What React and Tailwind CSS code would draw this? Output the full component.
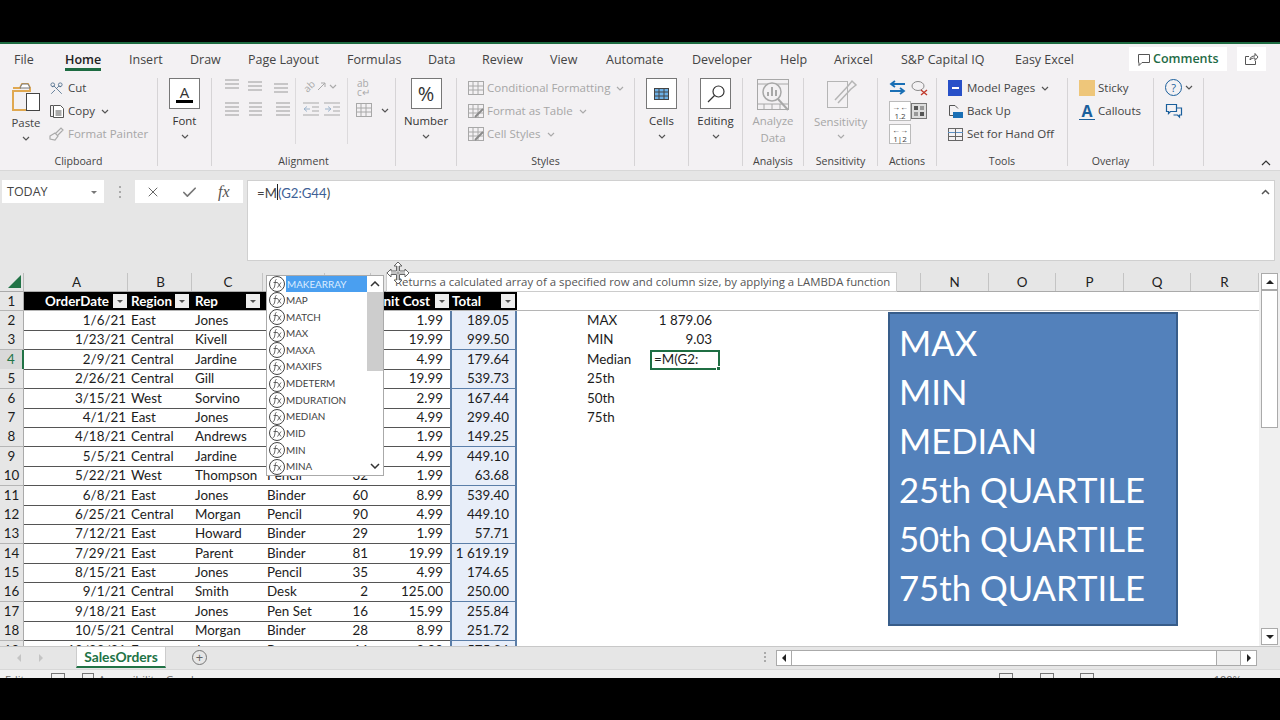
import React from "react";
import { Scissors, X, Check } from "lucide-react";

const rows = [
  ["1/6/21", "East", "Jones", "", "", "1.99", "189.05"],
  ["1/23/21", "Central", "Kivell", "", "", "19.99", "999.50"],
  ["2/9/21", "Central", "Jardine", "", "", "4.99", "179.64"],
  ["2/26/21", "Central", "Gill", "", "", "19.99", "539.73"],
  ["3/15/21", "West", "Sorvino", "", "", "2.99", "167.44"],
  ["4/1/21", "East", "Jones", "", "", "4.99", "299.40"],
  ["4/18/21", "Central", "Andrews", "", "", "1.99", "149.25"],
  ["5/5/21", "Central", "Jardine", "", "", "4.99", "449.10"],
  ["5/22/21", "West", "Thompson", "Pencil", "32", "1.99", "63.68"],
  ["6/8/21", "East", "Jones", "Binder", "60", "8.99", "539.40"],
  ["6/25/21", "Central", "Morgan", "Pencil", "90", "4.99", "449.10"],
  ["7/12/21", "East", "Howard", "Binder", "29", "1.99", "57.71"],
  ["7/29/21", "East", "Parent", "Binder", "81", "19.99", "1 619.19"],
  ["8/15/21", "East", "Jones", "Pencil", "35", "4.99", "174.65"],
  ["9/1/21", "Central", "Smith", "Desk", "2", "125.00", "250.00"],
  ["9/18/21", "East", "Jones", "Pen Set", "16", "15.99", "255.84"],
  ["10/5/21", "Central", "Morgan", "Binder", "28", "8.99", "251.72"],
  ["10/22/21", "East", "Jones", "Pen", "64", "8.99", "575.36"],
];

const sideCells = {
  2: ["MAX", "1 879.06"],
  3: ["MIN", "9.03"],
  4: ["Median", ""],
  5: ["25th", ""],
  6: ["50th", ""],
  7: ["75th", ""],
};

const columns = "grid grid-cols-[24px_104px_64px_71px_62px_46px_79px_67px_67px_67px_68px_67px_68px_67px_68px_67px_68px_67px_68px]";
const letters = ["A", "B", "C", "", "", "", "", "", "", "", "", "", "", "N", "O", "P", "Q", "R"];
const functions = ["MAP", "MATCH", "MAX", "MAXA", "MAXIFS", "MDETERM", "MDURATION", "MEDIAN", "MID", "MIN", "MINA"];
const tabs = [
  ["File", "w-[51px]"], ["Home", "w-[64px]"], ["Insert", "w-[61px]"], ["Draw", "w-[58px]"], ["Page Layout", "w-[99px]"],
  ["Formulas", "w-[81px]"], ["Data", "w-[54px]"], ["Review", "w-[68px]"], ["View", "w-[56px]"], ["Automate", "w-[86px]"],
  ["Developer", "w-[88px]"], ["Help", "w-[54px]"], ["Arixcel", "w-[67px]"], ["S&P Capital IQ", "w-[114px]"], ["Easy Excel", "w-[114px]"],
];

const Chevron = ({ className = "text-[#555]" }) => (
  <svg className={className} width="8" height="5" viewBox="0 0 8 5" fill="none" stroke="currentColor" strokeWidth="1.2">
    <path d="M1 1l3 3 3-3" />
  </svg>
);

const Lines = ({ ys, x1 = 0, x2 = 14 }) => (
  <svg width="16" height="14" viewBox="0 0 16 14" stroke="#a9a9a9" strokeWidth="1.2">
    {ys.map((y) => <path key={y} d={`M${x1} ${y}H${x2}`} />)}
  </svg>
);

const Indent = ({ flip }) => (
  <svg width="16" height="14" viewBox="0 0 16 14" fill="none" stroke="#a9a9a9">
    <path d="M0 1H16M9 5H16M9 9H16M0 13H16" />
    <path d={flip ? "M1 7H7M4 4.500L7 7 4 9.500" : "M1 7H7M4 4.500L1 7 4 9.500"} stroke="#9db4cc" />
  </svg>
);

const Group = ({ width, label, children }) => (
  <div className={`mt-[3px] flex h-[88px] shrink-0 flex-col border-r border-[#d6d4d6] ${width}`}>
    <div className="-mt-[2px] flex h-[72px] shrink-0">{children}</div>
    <div className="mt-[6px] h-[15px] text-center text-[10.6px] leading-[15px] text-[#444]">{label}</div>
  </div>
);

const BoxButton = ({ label, children }) => (
  <div className="flex w-full flex-col items-center pt-[2px]">
    <div className="flex h-[31px] w-[31px] items-center justify-center border border-[#777] bg-white">{children}</div>
    <div className="mt-[3px] text-[11.4px] leading-[18px] text-[#333]">{label}</div>
    <div className="mt-[4px]"><Chevron /></div>
  </div>
);

const SmallRow = ({ icon, text, muted, chevron }) => (
  <div className={`flex h-[23px] items-center gap-[3px] whitespace-nowrap pt-px text-[11.5px] ${muted ? "text-[#a6a6a6]" : "text-[#444]"}`}>
    <span className="flex w-[16px] shrink-0 items-center">{icon}</span>
    <span>{text}</span>
    {chevron && <span className="ml-[3px]"><Chevron className={muted ? "text-[#aaa]" : "text-[#555]"} /></span>}
  </div>
);

const GrayGrid = ({ kind }) => (
  <svg width="16" height="14" viewBox="0 0 16 14" fill="none" stroke="#a8a8a8">
    <rect x="0.5" y="0.5" width="15" height="13" />
    <path d="M0 5H16M0 9H16M5 0V14M10 0V14" />
    {kind && <path d="M7 13L15 5" stroke="#8a8a8a" strokeWidth="2" />}
  </svg>
);

const FilterButton = () => (
  <span className="flex h-[14px] w-[14px] shrink-0 items-center justify-center bg-[#eeeeee]">
    <span className="h-0 w-0 border-x-[3px] border-t-[3px] border-x-transparent border-t-[#555]" />
  </span>
);

const FxIcon = () => (
  <svg className="shrink-0" width="16" height="16" viewBox="0 0 16 16" fill="none" stroke="#444">
    <circle cx="8" cy="8" r="7.500" fill="#fff" />
    <path d="M7.500 3.500C6 3.500 6.500 5 6 8S5.500 12.500 3.800 12.500M4.500 6.500H8.500M8.500 6.500L12 11.500M12 6.500L8.500 11.500" strokeWidth="0.8" />
  </svg>
);

const ScrollButton = ({ children }) => (
  <div className="flex h-[17px] w-[17px] shrink-0 items-center justify-center border border-[#aaa] bg-white">{children}</div>
);

const DataRow = ({ number, row }) => {
  const active = number === 4;
  const side = sideCells[number];
  return (
    <div className={`${columns} h-[19.4px] text-[13.4px] leading-[19px] text-[#1c1c1c]`}>
      <div className={`border-b border-[#b5b5b5] text-center ${active ? "border-r-2 border-r-[#217346] bg-[#d9d9d9] text-[#217346]" : "border-r border-r-[#aaa] bg-[#e6e6e6]"}`}>{number}</div>
      <div className="overflow-hidden border-b border-[#555] pr-[2px] text-right">{row[0]}</div>
      <div className="overflow-hidden border-b border-[#555] pl-[3px]">{row[1]}</div>
      <div className="overflow-hidden border-b border-[#555] pl-[3px]">{row[2]}</div>
      <div className="overflow-hidden border-b border-[#555] pl-[4px]">{row[3]}</div>
      <div className="overflow-hidden border-b border-[#555] pr-[3px] text-right">{row[4]}</div>
      <div className="overflow-hidden border-b border-[#555] pr-[7px] text-right">{row[5]}</div>
      <div className="overflow-hidden border-x-2 border-b border-[#5b7ea8] bg-[#e8eef9] pr-[6px] text-right">{row[6]}</div>
      <div />
      <div className="pl-[3px]">{side ? side[0] : ""}</div>
      {active ? (
        <div className="relative -mx-px border-2 border-[#1f6e43] pl-[2px] leading-[15px]">
          =M(G2:
          <span className="absolute -bottom-[3px] -right-[3px] h-[5px] w-[5px] border border-white bg-[#1f6e43]" />
        </div>
      ) : (
        <div className="pr-[7px] text-right">{side ? side[1] : ""}</div>
      )}
    </div>
  );
};

const Ribbon = () => (
  <div className="flex h-[95px] shrink-0 bg-[#f3f1f3] text-[#444]">
    <Group width="w-[158px]" label="Clipboard">
      <div className="flex w-[50px] shrink-0 flex-col items-center pl-[2px] pt-[5px]">
        <svg width="30" height="30" viewBox="0 0 30 30" fill="none">
          <path d="M2 7h7l2-4h6l2 4v3H2v19h13" stroke="#e0a850" strokeWidth="2" />
          <path d="M9 7l2-4h6l2 4z" fill="#fff" stroke="#777" />
          <rect x="15.5" y="12.5" width="13" height="17" fill="#fff" stroke="#444" />
        </svg>
        <div className="mt-[3px] text-[11.4px] leading-[18px]">Paste</div>
        <div className="mt-[4px]"><Chevron /></div>
      </div>
      <div className="-ml-px flex flex-col">
        <SmallRow icon={<Scissors size={15} className="rotate-90 text-[#4a6b8a]" strokeWidth={1.3} />} text="Cut" />
        <SmallRow
          icon={
            <svg width="16" height="15" viewBox="0 0 16 15" fill="none" stroke="#555">
              <path d="M4 1.500H1.500v11H4" />
              <path d="M4.500 1.500h7l3 3v9h-10z" fill="#fff" />
              <path d="M6.500 7h6M6.500 9h6M6.500 11h6" />
            </svg>
          }
          text="Copy"
          chevron
        />
        <SmallRow
          muted
          icon={
            <svg width="16" height="14" viewBox="0 0 16 14" fill="none" stroke="#aaa" strokeWidth="1.2">
              <path d="M1 9l5-3 3 3-3 4-5-1zM7 6l5-5 2 2-5 5" />
            </svg>
          }
          text="Format Painter"
        />
      </div>
    </Group>
    <Group width="w-[54px]" label="">
      <BoxButton label="Font">
        <div className="flex flex-col items-center text-[15px] leading-[16px] text-[#333]">
          A
          <span className="h-[3px] w-[17px] bg-black" />
        </div>
      </BoxButton>
    </Group>
    <Group width="w-[184px]" label="Alignment">
      <div className="flex w-[83px] flex-col gap-[9px] pl-[13px] pt-[3px]">
        <div className="flex gap-[7px]">
          <Lines ys={[1, 5, 9]} />
          <Lines ys={[3, 7, 11]} />
          <span className="ml-[3px]"><Lines ys={[5, 9, 13]} /></span>
        </div>
        <div className="flex gap-[7px]">
          <Lines ys={[1, 5, 9, 13]} x2={14} />
          <Lines ys={[1, 5, 9, 13]} x1={1} />
          <span className="ml-[3px]"><Lines ys={[1, 5, 9, 13]} x1={2} x2={16} /></span>
        </div>
      </div>
      <div className="my-[2px] h-[66px] w-px bg-[#dcdadc]" />
      <div className="flex w-[51px] flex-col gap-[9px] pl-[7px] pt-[3px]">
        <div className="flex h-[14px] items-center gap-[3px]">
          <span className="-rotate-45 text-[10px] leading-none text-[#a9a9a9]">ab</span>
          <svg width="8" height="8" viewBox="0 0 8 8" fill="none" stroke="#a9a9a9">
            <path d="M0 8L7 1M3 1h4v4" />
          </svg>
          <Chevron className="text-[#aaa]" />
        </div>
        <div className="flex gap-[5px]">
          <Indent />
          <Indent flip />
        </div>
      </div>
      <div className="my-[2px] h-[66px] w-px bg-[#dcdadc]" />
      <div className="flex flex-col gap-[6px] pl-[8px] pt-[3px]">
        <div className="pl-[1px] text-[10px] leading-[9px] text-[#a9a9a9]">ab<br />c↵</div>
        <div className="flex items-center gap-[9px]">
          <GrayGrid />
          <Chevron />
        </div>
      </div>
    </Group>
    <Group width="w-[61px]" label="">
      <BoxButton label="Number">
        <span className="text-[20px] leading-none text-[#333]">%</span>
      </BoxButton>
    </Group>
    <Group width="w-[178px]" label="Styles">
      <div className="flex flex-col pl-[11px]">
        <SmallRow muted icon={<GrayGrid />} text="Conditional Formatting" chevron />
        <SmallRow muted icon={<GrayGrid kind />} text="Format as Table" chevron />
        <SmallRow muted icon={<GrayGrid kind />} text="Cell Styles" chevron />
      </div>
    </Group>
    <Group width="w-[54px]" label="">
      <BoxButton label="Cells">
        <svg width="17" height="17" viewBox="0 0 17 17" fill="none" stroke="#444">
          <rect x="1.5" y="3.5" width="14" height="11" fill="#6db0e6" />
          <path d="M1 7H16M1 11H16M6 3V15M11 3V15" />
        </svg>
      </BoxButton>
    </Group>
    <Group width="w-[54px]" label="">
      <BoxButton label="Editing">
        <svg width="20" height="20" viewBox="0 0 20 20" fill="none" stroke="#333" strokeWidth="1.2">
          <circle cx="12.5" cy="7.5" r="5.5" />
          <path d="M8.5 11.5L2 18" />
        </svg>
      </BoxButton>
    </Group>
    <Group width="w-[61px]" label="Analysis">
      <div className="flex w-full flex-col items-center pt-[2px] text-[11.4px] leading-[17px] text-[#a6a6a6]">
        <svg width="34" height="34" viewBox="0 0 34 34" fill="none" stroke="#a8a8a8">
          <rect x="1.5" y="1.5" width="31" height="30" />
          <path d="M1 6H33M1 26H33M8 26V32M16 26V32M24 26V32" />
          <circle cx="16" cy="14" r="9" fill="#f3f1f3" strokeWidth="1.5" />
          <path d="M22 21l10 11" strokeWidth="2" />
          <path d="M12 18v-4M16 18V9M20 18v-6" strokeWidth="2" />
        </svg>
        <span>Analyze</span>
        <span>Data</span>
      </div>
    </Group>
    <Group width="w-[74px]" label="Sensitivity">
      <div className="flex w-full flex-col items-center pt-[2px] text-[11.4px] leading-[17px] text-[#a6a6a6]">
        <svg className="mb-[1px]" width="34" height="32" viewBox="0 0 34 32" fill="none" stroke="#b5b5b5">
          <rect x="3.5" y="3.5" width="20" height="26" />
          <path d="M11 22L24 8M14 25L27 11M24 8l4-5 4 4-5 4" strokeWidth="1.5" />
        </svg>
        <span className="mt-[2px]">Sensitivity</span>
        <span className="mt-[4px]"><Chevron className="text-[#aaa]" /></span>
      </div>
    </Group>
    <Group width="w-[59px]" label="Actions">
      <div className="grid grid-cols-[22px_18px] grid-rows-[23px_23px_23px] items-center pl-[11px]">
        <svg width="17" height="15" viewBox="0 0 17 15" fill="none" stroke="#1a6fb5" strokeWidth="1.8">
          <path d="M16 4H3M6 1L2 4l4 3M1 11h13M11 8l4 3-4 3" />
        </svg>
        <svg width="17" height="16" viewBox="0 0 17 16" fill="none" stroke="#8a8a8a">
          <ellipse cx="7" cy="6" rx="6" ry="4.5" />
          <path d="M10 10l6 5M16 10l-6 5" stroke="#c0392b" strokeWidth="1.4" />
        </svg>
        <div className="border border-[#bbb] bg-white text-center text-[8px] leading-[9px] text-[#444]">→←<br />1.2</div>
        <div className="grid h-[16px] w-[16px] grid-cols-2 gap-[2px] border border-[#777] bg-[#ddd] p-[2px]">
          <span className="bg-[#555]" /><span className="bg-[#999]" /><span className="bg-[#999]" /><span className="bg-[#555]" />
        </div>
        <div className="border border-[#bbb] bg-white text-center text-[8px] leading-[9px] text-[#444]">←→<br />1|2</div>
      </div>
    </Group>
    <Group width="w-[131px]" label="Tools">
      <div className="flex flex-col pl-[11px]">
        <SmallRow
          icon={
            <span className="flex h-[16px] w-[14px] items-center justify-center bg-[#2850c8]">
              <span className="h-[2px] w-[7px] bg-white" />
            </span>
          }
          text="Model Pages"
          chevron
        />
        <SmallRow
          icon={
            <svg width="15" height="15" viewBox="0 0 15 15" fill="none">
              <path d="M7 1.5H1.5v10H5" stroke="#555" />
              <path d="M7 1.5l3 3" stroke="#555" />
              <rect x="5" y="8" width="10" height="6" fill="#1a6fb5" />
            </svg>
          }
          text="Back Up"
        />
        <SmallRow
          icon={
            <svg width="15" height="13" viewBox="0 0 15 13" fill="none" stroke="#666">
              <rect x="0.5" y="0.5" width="14" height="12" />
              <path d="M0 4.5H15" stroke="#5b8fc4" />
              <path d="M0 8.5H15M7.5 0V13" />
            </svg>
          }
          text="Set for Hand Off"
        />
      </div>
    </Group>
    <Group width="w-[86px]" label="Overlay">
      <div className="flex flex-col pl-[11px]">
        <SmallRow icon={<span className="h-[16px] w-[16px] bg-[#eec67a]" />} text="Sticky" />
        <SmallRow
          icon={
            <span className="flex h-[17px] w-[16px] items-center justify-center border-b border-[#1a5f9c] text-[16px] font-bold leading-none text-[#1a5f9c]">A</span>
          }
          text="Callouts"
        />
      </div>
    </Group>
    <Group width="w-[50px]" label="">
      <div className="flex flex-col pl-[11px]">
        <div className="flex h-[23px] items-center gap-[3px]">
          <span className="flex h-[17px] w-[17px] items-center justify-center rounded-full border border-[#1a5f9c] text-[11px] leading-none text-[#1a5f9c]">?</span>
          <Chevron />
        </div>
        <div className="flex h-[23px] items-center">
          <svg width="18" height="16" viewBox="0 0 18 16" fill="none" stroke="#1a5f9c" strokeWidth="1.2">
            <path d="M1.5 1.5h10v7h-6l-2 2v-2h-2zM12 5h4.500v7h-2v2l-2-2h-4" />
          </svg>
        </div>
      </div>
    </Group>
    <div className="flex flex-1 items-end justify-end pb-[4px] pr-[9px]">
      <svg width="10" height="6" viewBox="0 0 10 6" fill="none" stroke="#333" strokeWidth="1.2">
        <path d="M1 5l4-4 4 4" />
      </svg>
    </div>
  </div>
);

export default function App() {
  return (
    <div className="relative flex h-[720px] w-[1280px] flex-col overflow-hidden bg-black font-['Open_Sans',sans-serif]">
      <div className="h-[42px] shrink-0 bg-black" />
      <div className="h-[2px] shrink-0 bg-[#1d6b41]" />

      <div className="flex h-[31px] shrink-0 items-start bg-[#f3f1f3] pl-[14px] pt-[5px] text-[12.5px] text-[#444]">
        {tabs.map(([name, width]) => (
          <div key={name} className={`shrink-0 ${width}`}>
            <span className={`inline-block h-[22px] whitespace-nowrap leading-[21px] ${name === "Home" ? "border-b-[3px] border-[#1d6b41] font-semibold text-[#222]" : ""}`}>{name}</span>
          </div>
        ))}
        <div className="-mt-[2px] flex h-[24px] w-[98px] shrink-0 items-center gap-[1px] bg-white pl-[8px] pt-px font-semibold text-[#1f6b46]">
          <svg className="mr-[1px]" width="14" height="14" viewBox="0 0 14 14" fill="none" stroke="#555">
            <path d="M1.500 1.500h11v8H5l-3 3v-3h-.5z" />
          </svg>
          Comments
        </div>
        <div className="-mt-[2px] ml-[10px] flex h-[24px] w-[29px] shrink-0 items-center justify-center bg-white">
          <svg width="15" height="14" viewBox="0 0 15 14" fill="none" stroke="#555">
            <path d="M5 4.500H1.500v8h10V9M6 8c0-3 2-4 5-4V1.500L14 5l-3 3.500V6c-2 0-4 .500-5 2z" />
          </svg>
        </div>
      </div>

      <Ribbon />

      <div className="flex h-[103px] shrink-0 items-start border-t border-[#d8d8d8] bg-[#e6e6e6] pt-[9px] text-[12.5px] text-[#444]">
        <div className="ml-[2px] flex h-[23px] w-[102px] items-center justify-between bg-white pl-[5px] pr-[7px] pt-[2px]">
          TODAY
          <span className="h-0 w-0 border-x-[3px] border-t-[3px] border-x-transparent border-t-[#777]" />
        </div>
        <div className="flex h-[23px] w-[31px] flex-col items-center justify-center gap-[3px]">
          <span className="h-[2px] w-[2px] bg-[#aaa]" />
          <span className="h-[2px] w-[2px] bg-[#aaa]" />
          <span className="h-[2px] w-[2px] bg-[#aaa]" />
        </div>
        <div className="flex h-[23px] w-[108px] items-center bg-white pl-[10px] pt-px">
          <X size={16} strokeWidth={1.5} className="text-[#666]" />
          <Check size={17} strokeWidth={2.4} className="ml-[20px] text-[#777]" />
          <span className="ml-[20px] font-['Liberation_Serif',serif] text-[16px] italic text-[#555]">fx</span>
        </div>
        <div className="ml-[4px] flex h-[81px] w-[1028px] items-start justify-between border border-[#d0d0d0] bg-white pl-[9px] pr-[4px] pt-[2px] font-['Lato',sans-serif] text-[13.2px] leading-[18px]">
          <div className="mt-px flex">
            <span>=M</span>
            <span className="h-[16px] w-px bg-[#222]" />
            <span className="text-[#3d5f96]">(G2:G44</span>
            <span>)</span>
          </div>
          <svg className="mt-[6px]" width="9" height="6" viewBox="0 0 9 6" fill="none" stroke="#555" strokeWidth="1.5">
            <path d="M1 5l3.500-3.500L8 5" />
          </svg>
        </div>
      </div>

      <div className="flex h-[373px] shrink-0 overflow-hidden bg-white font-['Lato',sans-serif]">
        <div className="w-[1259px] shrink-0 overflow-hidden">
          <div className={`${columns} h-[19px] border-b border-[#aaa] bg-[#e6e6e6] text-center text-[13.4px] leading-[18px] text-[#222]`}>
            <div className="flex items-end justify-end border-r border-[#bbb] pb-[3px] pr-[2px]">
              <span className="h-0 w-0 border-b-[13px] border-l-[13px] border-b-[#217346] border-l-transparent" />
            </div>
            {letters.map((letter, i) => (
              <div key={i} className={`border-r border-[#c4c4c4] ${i < 3 ? "pl-[2px]" : ""}`}>{letter}</div>
            ))}
          </div>
          <div className={`${columns} h-[19px] border-b border-[#b5b5b5] text-[13.4px] font-bold leading-[18px] text-white`}>
            <div className="border-r border-[#aaa] bg-[#e6e6e6] text-center font-normal text-[#222]">1</div>
            <div className="flex items-center justify-end gap-[4px] bg-black pr-[1px]">OrderDate<FilterButton /></div>
            <div className="flex items-center justify-between bg-black pl-[3px] pr-[3px]">Region<FilterButton /></div>
            <div className="flex items-center justify-between bg-black pl-[3px] pr-[3px]">Rep<FilterButton /></div>
            <div className="bg-black" />
            <div className="bg-black" />
            <div className="flex items-center justify-end gap-[5px] bg-black pr-[1px]">Unit Cost<FilterButton /></div>
            <div className="flex items-center justify-between bg-black pl-[2px] pr-[2px]">Total<FilterButton /></div>
          </div>
          {rows.map((row, i) => (
            <DataRow key={i} number={i + 2} row={row} />
          ))}
        </div>
        <div className="flex flex-1 flex-col items-center bg-[#f0f0f0]">
          <ScrollButton>
            <span className="h-0 w-0 border-x-[4px] border-b-[4px] border-x-transparent border-b-[#222]" />
          </ScrollButton>
          <div className="h-[138px] w-[17px] shrink-0 border border-[#aaa] bg-white" />
          <div className="flex-1" />
          <div className="mb-[1px]">
            <ScrollButton>
              <span className="h-0 w-0 border-x-[4px] border-t-[4px] border-x-transparent border-t-[#222]" />
            </ScrollButton>
          </div>
        </div>
      </div>

      <div className="flex h-[23px] shrink-0 items-start border-t border-[#c8c8c8] bg-[#e6e6e6]">
        <div className="flex h-[22px] w-[76px] shrink-0 items-center gap-[18px] pl-[17px]">
          <span className="h-0 w-0 border-y-[4px] border-r-[4px] border-y-transparent border-r-[#c4c4c4]" />
          <span className="h-0 w-0 border-y-[4px] border-l-[4px] border-y-transparent border-l-[#c4c4c4]" />
        </div>
        <div className="flex h-[21px] w-[90px] shrink-0 items-center justify-center border-b-2 border-x border-x-[#ccc] border-b-[#217346] bg-white text-[13.8px] font-bold leading-[18px] text-[#217346]">
          <span className="font-['Lato',sans-serif]">SalesOrders</span>
        </div>
        <div className="ml-[26px] mt-[3px] flex h-[15px] w-[15px] shrink-0 items-center justify-center rounded-full border border-[#777] text-[13px] leading-none text-[#666]">+</div>
        <div className="ml-[557px] mt-[5px] flex h-[14px] shrink-0 flex-col gap-[2px]">
          <span className="h-[2px] w-[2px] bg-[#aaa]" />
          <span className="h-[2px] w-[2px] bg-[#aaa]" />
          <span className="h-[2px] w-[2px] bg-[#aaa]" />
        </div>
        <div className="ml-[10px] mt-[3px] flex h-[16px] shrink-0 items-stretch border border-[#aaa] bg-[#f0f0f0]">
          <div className="flex w-[15px] items-center justify-center border-r border-[#aaa] bg-white">
            <span className="h-0 w-0 border-y-[4px] border-r-[4px] border-y-transparent border-r-[#222]" />
          </div>
          <div className="w-[424px] bg-white" />
          <div className="w-[24px] border-l border-[#aaa]" />
          <div className="flex w-[16px] items-center justify-center border-l border-[#aaa] bg-white">
            <span className="h-0 w-0 border-y-[4px] border-l-[4px] border-y-transparent border-l-[#222]" />
          </div>
        </div>
      </div>

      <div className="flex h-[9px] shrink-0 items-start overflow-hidden border-t border-[#d8d8d8] bg-[#f1f1f1] pl-[5px] text-[11px] leading-[14px] text-[#666]">
        <span className="mt-[3px]">Edit</span>
        <span className="ml-[26px] mt-[3px] h-[12px] w-[14px] border border-[#777]" />
        <span className="ml-[17px] mt-[3px] h-[12px] w-[12px] border border-[#777]" />
        <span className="ml-[5px] mt-[3px]">Accessibility: Good</span>
        <span className="ml-[805px] mt-[3px] h-[12px] w-[14px] border border-[#777]" />
        <span className="ml-[27px] mt-[3px] h-[12px] w-[14px] border border-[#777]" />
        <span className="ml-[26px] mt-[3px] h-[12px] w-[14px] border border-[#777]" />
        <span className="ml-[120px] mt-[3px]">100%</span>
      </div>

      <div className="flex-1 bg-black" />

      {/* text box lying over the sheet */}
      <div className="absolute left-[888px] top-[312px] flex h-[314px] w-[290px] flex-col border-2 border-[#385d8a] bg-[#5381bb] pl-[9px] pt-[4px] font-['Lato',sans-serif] text-[34.7px] leading-[49px] text-white">
        <span>MAX</span>
        <span>MIN</span>
        <span>MEDIAN</span>
        <span>25th QUARTILE</span>
        <span>50th QUARTILE</span>
        <span>75th QUARTILE</span>
      </div>

      {/* function autocomplete */}
      <div className="absolute left-[266px] top-[275px] flex h-[201px] w-[118px] border border-[#aaa] bg-white font-['Lato',sans-serif] text-[9.9px] text-[#444]">
        <div className="flex w-[100px] flex-col">
          <div className="flex h-[16px] items-center pl-[2px]">
            <FxIcon />
            <span className="ml-px flex h-full w-[81px] items-center bg-[#4a9ff0] pl-px text-[#dcecff]">MAKEARRAY</span>
          </div>
          {functions.map((name) => (
            <div key={name} className="flex h-[16.85px] items-center gap-px pl-[2px]">
              <FxIcon />
              {name}
            </div>
          ))}
        </div>
        <div className="flex flex-1 flex-col items-center">
          <div className="flex h-[16px] items-center">
            <svg width="10" height="6" viewBox="0 0 10 6" fill="none" stroke="#333" strokeWidth="1.5"><path d="M1 5l4-4 4 4" /></svg>
          </div>
          <div className="h-[79px] w-full bg-[#cdcdcd]" />
          <div className="flex-1" />
          <div className="flex h-[18px] items-center">
            <svg width="10" height="6" viewBox="0 0 10 6" fill="none" stroke="#333" strokeWidth="1.5"><path d="M1 1l4 4 4-4" /></svg>
          </div>
        </div>
      </div>

      {/* function tooltip */}
      <div className="absolute left-[386px] top-[272px] flex h-[20px] w-[511px] items-center whitespace-nowrap border border-[#ccc] bg-white pl-[8px] text-[11.4px] text-[#555]">
        Returns a calculated array of a specified row and column size, by applying a LAMBDA function
      </div>

      {/* move cursor */}
      <svg className="absolute left-[386px] top-[261px]" width="24" height="24" viewBox="0 0 24 24" fill="#fff" stroke="#666" strokeWidth="1">
        <path d="M12 1l4 4h-2.500v5H19V8l4 4-4 4v-2.500h-5.500V19H16l-4 4-4-4h2.500v-5.500H5V16l-4-4 4-4v2h5.500V5H8z" />
        <path d="M12 5v14M5 12h14" stroke="#888" />
      </svg>
    </div>
  );
}
